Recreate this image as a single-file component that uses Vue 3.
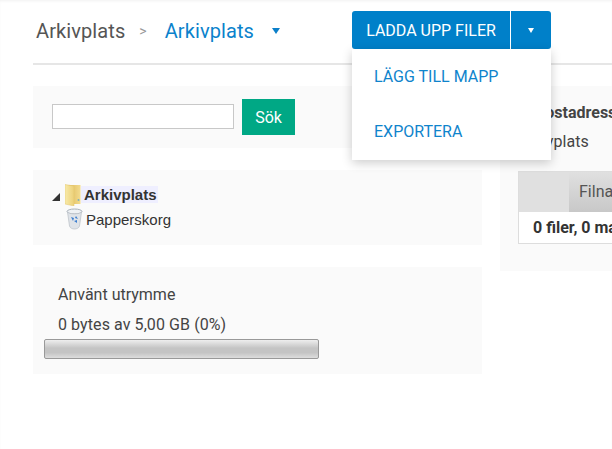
<template>
  <div class="page">
    <header class="topbar">
      <div class="crumbs">
        <span class="crumb">Arkivplats</span>
        <span class="sep">&gt;</span>
        <span class="crumb current">Arkivplats</span>
        <span class="caret"></span>
      </div>
      <div class="upload">
        <div class="btn-group">
          <button class="btn main">LADDA UPP FILER</button>
          <button class="btn toggle"><span class="caret small"></span></button>
        </div>
        <div class="menu">
          <a class="menu-item">LÄGG TILL MAPP</a>
          <a class="menu-item">EXPORTERA</a>
        </div>
      </div>
    </header>

    <div class="columns">
      <div class="left">
        <section class="panel search">
          <input class="search-input" type="text" />
          <button class="search-btn">Sök</button>
        </section>

        <section class="panel tree">
          <div class="tree-row">
            <span class="arrow"></span>
            <svg class="tree-icon" viewBox="0 0 16 22" width="16" height="22">
              <defs>
                <linearGradient id="fold" x1="0" y1="0" x2="1" y2="0">
                  <stop offset="0" stop-color="#f8eaa8" />
                  <stop offset="1" stop-color="#ecd078" />
                </linearGradient>
                <linearGradient id="foldback" x1="0" y1="0" x2="1" y2="0">
                  <stop offset="0" stop-color="#d9b04c" />
                  <stop offset="1" stop-color="#f3dc8e" />
                </linearGradient>
              </defs>
              <path d="M0 1h15.5v19H9z" fill="url(#foldback)" />
              <path d="M0 .5l9 1.5v20l-9-2z" fill="url(#fold)" stroke="#e2c46c" stroke-width=".5" />
              <circle cx="13.5" cy="16" r="1" fill="#7fb0b8" />
            </svg>
            <span class="tree-label active">Arkivplats</span>
          </div>
          <div class="tree-row trash">
            <svg class="tree-icon" viewBox="0 0 17 22" width="17" height="22">
              <ellipse cx="8.5" cy="3.5" rx="7.5" ry="2.5" fill="#eef1f4" stroke="#a9b1ba" />
              <path d="M1.5 4l2 14c1 4 9 4 10 0l2-14c-2 2.5-12 2.5-14 0z" fill="#dfe3e8" stroke="#b9bfc6" stroke-width=".7" />
              <path d="M5 9l3 1-1 3zM8 13l3-1 0 3zM10 8l2 3-3-1z" fill="#3c7ed0" />
            </svg>
            <span class="tree-label">Papperskorg</span>
          </div>
        </section>

        <section class="panel quota">
          <div class="quota-title">Använt utrymme</div>
          <div class="quota-text">0 bytes av 5,00 GB (0%)</div>
          <div class="quota-bar"></div>
        </section>
      </div>

      <div class="right">
        <div class="mail">E-postadress</div>
        <div class="folder">Arkivplats</div>
        <div class="files">
          <div class="files-head">
            <div class="check-col"></div>
            <div class="name-col">Filnamn</div>
          </div>
          <div class="files-foot">0 filer, 0 mappar</div>
        </div>
      </div>
    </div>
  </div>
</template>

<script setup>
</script>

<style>
html,
body {
  margin: 0;
  background: #fff;
  overflow: hidden;
}
</style>

<style scoped>
.page {
  width: 612px;
  height: 449px;
  overflow: hidden;
  padding-left: 33px;
  box-sizing: border-box;
  font-family: Roboto, sans-serif;
  color: #444;
  box-shadow: inset 0 2px 3px -1px rgba(0, 0, 0, 0.06);
}
.topbar {
  display: flex;
  height: 65px;
  box-sizing: border-box;
  border-bottom: 2px solid #e6e6e6;
  padding-top: 11px;
}
.crumbs {
  width: 319px;
  display: flex;
  align-items: center;
  height: 40px;
  padding-left: 3px;
  box-sizing: border-box;
  font-size: 20px;
}
.crumb {
  color: #555;
  letter-spacing: 0.1px;
}
.current {
  color: #0b82cc;
}
.sep {
  font-size: 14px;
  color: #999;
  margin: 0 18px 0 14px;
}
.caret {
  width: 0;
  height: 0;
  margin-left: 18px;
  border-left: 4px solid transparent;
  border-right: 4px solid transparent;
  border-top: 6px solid #0b7fc9;
}
.small {
  display: block;
  margin: 0;
  border-left-width: 3px;
  border-right-width: 3px;
  border-top: 5px solid #fff;
}
.upload {
  position: relative;
  width: 199px;
}
.btn-group {
  display: flex;
  height: 38px;
}
.btn {
  border: none;
  background: #0080c9;
  color: #fff;
  font-family: Roboto, sans-serif;
  padding: 0;
  display: flex;
  align-items: center;
  justify-content: center;
}
.main {
  width: 158px;
  font-size: 16px;
  border-radius: 3px 0 0 3px;
}
.toggle {
  flex: 1;
  margin-left: 1px;
  border-radius: 0 3px 3px 0;
}
.menu {
  position: absolute;
  top: 38px;
  left: 0;
  right: 0;
  height: 111px;
  background: #fff;
  box-shadow: 0 3px 10px rgba(0, 0, 0, 0.2);
  z-index: 2;
}
.menu-item {
  display: block;
  height: 55px;
  line-height: 55px;
  padding-left: 22px;
  font-size: 16px;
  color: #0f84cc;
}
.columns {
  display: flex;
  gap: 18px;
  padding-top: 21px;
}
.left {
  width: 449px;
  flex: none;
  display: flex;
  flex-direction: column;
  gap: 22px;
}
.panel {
  background: #fafafa;
  box-sizing: border-box;
}
.search {
  height: 62px;
  padding: 13px 0 0 19px;
  display: flex;
  align-items: flex-start;
  gap: 8px;
}
.search-input {
  width: 182px;
  height: 25px;
  box-sizing: border-box;
  margin-top: 5px;
  border: 1px solid #c8c8c8;
  background: #fff;
  padding: 0;
}
.search-btn {
  width: 53px;
  height: 36px;
  border: none;
  padding: 0;
  background: #00a885;
  color: #fff;
  font-family: Roboto, sans-serif;
  font-size: 16px;
}
.tree {
  height: 75px;
  padding: 13px 0 0 19px;
}
.tree-row {
  display: flex;
  align-items: center;
  height: 24px;
}
.trash {
  padding-left: 14px;
}
.arrow {
  width: 0;
  height: 0;
  border-bottom: 8px solid #333;
  border-left: 8px solid transparent;
  margin: 3px 5px 0 0;
}
.tree-icon {
  flex: none;
}
.tree-label {
  font-family: "Liberation Sans", Arial, sans-serif;
  font-size: 15px;
  color: #333;
  padding: 0 1px 0 3px;
}
.active {
  font-weight: 700;
  background: #efefff;
  margin-bottom: 2px;
}
.quota {
  height: 107px;
  padding: 16px 0 0 11px;
  font-size: 16px;
}
.quota-title,
.quota-text {
  padding-left: 14px;
  line-height: 24px;
}
.quota-text {
  margin-top: 6px;
  letter-spacing: 0.08px;
}
.quota-bar {
  width: 275px;
  height: 20px;
  margin-top: 2px;
  box-sizing: border-box;
  border: 1px solid #999;
  border-radius: 2px;
  background: linear-gradient(#eee, #c4c4c4 45%, #c4c4c4 70%, #ddd);
}
.right {
  width: 200px;
  flex: none;
  height: 185px;
  background: #fafafa;
  padding: 15px 0 0 18px;
  box-sizing: border-box;
  font-size: 16px;
}
.mail {
  font-weight: 700;
  line-height: 24px;
  padding-left: 3px;
}
.folder {
  line-height: 24px;
  margin-top: 5px;
}
.files {
  width: 260px;
  margin-top: 17px;
  border: 1px solid #ddd;
  background: #fff;
}
.files-head {
  display: flex;
  height: 40px;
  background: #e0e0e0;
}
.check-col {
  width: 50px;
}
.name-col {
  flex: 1;
  padding-left: 10px;
  line-height: 40px;
  color: #555;
  background: linear-gradient(#e0e0e0, #c8c8c8);
}
.files-foot {
  height: 31px;
  line-height: 31px;
  padding-left: 14px;
  font-weight: 700;
  color: #333;
}
</style>
